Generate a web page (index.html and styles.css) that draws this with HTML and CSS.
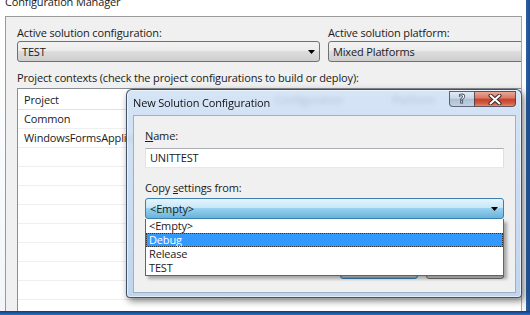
FILE: index.html
```html
<!DOCTYPE html>
<html>
<head>
<meta charset="utf-8">
<link rel="stylesheet" href="styles.css">
</head>
<body>
<div class="screen">
  <div class="upper">
    <div class="window">
      <div class="caption"><span>Configuration Manager</span></div>
      <div class="client">
        <div class="top-row">
          <div class="field f-left">
            <div class="label">Active solution configuration:</div>
            <div class="combo"><span>TEST</span><svg class="arrow" width="7" height="4" viewBox="0 0 7 4"><path d="M0 0H7L3.5 4Z" fill="#000"/></svg></div>
          </div>
          <div class="field f-right">
            <div class="label">Active solution platform:</div>
            <div class="combo"><span>Mixed Platforms</span></div>
          </div>
        </div>
        <div class="label contexts">Project contexts (check the project configurations to build or deploy):</div>
        <div class="grid">
          <div class="grow head"><div class="c c1">Project</div><div class="c c2">Configuration</div><div class="c c3">Platform</div><div class="c c4">Build</div></div>
          <div class="grow"><div class="c c1">Common</div><div class="c c2"></div><div class="c c3"></div><div class="c c4"></div></div>
          <div class="grow"><div class="c c1">WindowsFormsApplication1</div><div class="c c2"></div><div class="c c3"></div><div class="c c4"></div></div>
          <div class="grow"><div class="c c1"></div><div class="c c2"></div><div class="c c3"></div><div class="c c4"></div></div>
          <div class="grow"><div class="c c1"></div><div class="c c2"></div><div class="c c3"></div><div class="c c4"></div></div>
          <div class="grow"><div class="c c1"></div><div class="c c2"></div><div class="c c3"></div><div class="c c4"></div></div>
          <div class="grow"><div class="c c1"></div><div class="c c2"></div><div class="c c3"></div><div class="c c4"></div></div>
          <div class="grow"><div class="c c1"></div><div class="c c2"></div><div class="c c3"></div><div class="c c4"></div></div>
          <div class="grow"><div class="c c1"></div><div class="c c2"></div><div class="c c3"></div><div class="c c4"></div></div>
          <div class="grow"><div class="c c1"></div><div class="c c2"></div><div class="c c3"></div><div class="c c4"></div></div>
          <div class="grow"><div class="c c1"></div><div class="c c2"></div><div class="c c3"></div><div class="c c4"></div></div>
        </div>
      </div>
    </div>
    <div class="desk-right"></div>
  </div>
  <div class="taskbar"></div>

  <div class="dialog">
    <div class="dlg-title">
      <span class="dlg-caption">New Solution Configuration</span>
      <div class="cbtns">
        <div class="cbtn help"><span>?</span></div>
        <div class="cbtn close"><svg width="14" height="11" viewBox="0 0 14 11"><path d="M2.5 1.5L11.5 9.5M11.5 1.5L2.5 9.5" stroke="#3b2a2a" stroke-width="4" stroke-linecap="round"/><path d="M2.5 1.5L11.5 9.5M11.5 1.5L2.5 9.5" stroke="#fff" stroke-width="2" stroke-linecap="round"/></svg></div>
      </div>
    </div>
    <div class="dlg-body">
      <div class="dlabel"><span class="acc">N</span>ame:</div>
      <div class="textbox">UNITTEST</div>
      <div class="dlabel copy">Copy <span class="acc">s</span>ettings from:</div>
      <div class="dcombo-wrap">
        <div class="combo open"><span>&lt;Empty&gt;</span><svg class="arrow" width="7" height="4" viewBox="0 0 7 4"><path d="M0 0H7L3.5 4Z" fill="#000"/></svg></div>
        <div class="droplist">
          <div class="item">&lt;Empty&gt;</div>
          <div class="item sel">Debug</div>
          <div class="item">Release</div>
          <div class="item">TEST</div>
        </div>
      </div>
      <div class="buttons"><div class="btn default">OK</div><div class="btn">Cancel</div></div>
    </div>
  </div>
</div>
</body>
</html>
```

FILE: styles.css
```css
* { box-sizing: border-box; }
html, body { margin: 0; padding: 0; }
body {
  width: 530px; height: 315px; overflow: hidden;
  font-family: "Open Sans", "Noto Sans", sans-serif;
  font-size: 11px; letter-spacing: -0.15px; color: #1a1a1a;
}
.screen { position: relative; width: 530px; height: 315px; display: flex; flex-direction: column; overflow: hidden; }
.upper { height: 311px; display: flex; }
.window {
  width: 526px; height: 311px; display: flex; flex-direction: column;
  background: linear-gradient(180deg, #ffffff, #f3f5f8);
  padding: 0 4px 0 5px;
}
.desk-right { width: 4px; background: linear-gradient(90deg, #2f5f9c, #1c4f96); }
.taskbar { height: 4px; background: linear-gradient(180deg, #0f3c7c, #2f6fc0); }

.caption { height: 16px; display: flex; align-items: flex-end; padding-bottom: 8px; overflow: hidden; }
.caption span { line-height: 13px; font-size: 11px; color: #1a1a1a; }

.client {
  flex: 1; overflow: hidden;
  background: #f0f0f0;
  border-left: 1px solid #9a9a9a; border-top: 1px solid #9a9a9a; border-right: 1px solid #a8a8a8;
  padding: 8px 0 0 11px;
}
.label { line-height: 15px; white-space: nowrap; }
.top-row { display: flex; gap: 8px; }
.field { flex: none; }
.field.f-left { width: 303px; }
.field.f-right { width: 220px; }

.combo {
  margin-top: 1px; height: 21px; position: relative;
  border: 1px solid #707070; border-radius: 3px;
  background: linear-gradient(180deg, #f2f2f2 0%, #ebebeb 50%, #dddddd 50%, #cfcfcf 100%);
  display: flex; align-items: center; padding-left: 4px; padding-right: 4px;
  justify-content: space-between; white-space: nowrap;
}

.contexts { margin-top: 8px; }
.grid {
  margin-top: 3px; width: 510px; height: 240px;
  border: 1px solid #8a8f96; border-right: none; border-bottom: none;
  background: #fff;
}
.grow { display: flex; height: 19px; border-bottom: 1px solid #efefef; }
.grow.head { height: 21px; border-bottom: 1px solid #e2e2e2; }
.c { padding-left: 6px; line-height: 18px; white-space: nowrap; overflow: hidden; border-right: 1px solid #efefef; }
.head .c { line-height: 21px; }
.c1 { width: 211px; }
.c2 { width: 151px; padding-left: 46px; }
.c3 { width: 100px; padding-left: 12px; }
.c4 { flex: 1; border-right: none; }

/* dialog */
.dialog {
  position: absolute; left: 126px; top: 89px; width: 396px; height: 209px;
  border: 1px solid rgba(35, 45, 65, 0.8); border-radius: 6px 6px 4px 4px;
  background: linear-gradient(180deg, rgba(205, 224, 244, 0.84), rgba(185, 208, 236, 0.9));
  backdrop-filter: blur(2.5px);
  box-shadow: 2px 3px 7px rgba(0, 0, 0, 0.5), inset 0 0 0 1px rgba(255, 255, 255, 0.55);
  display: flex; flex-direction: column;
}
.dlg-title { height: 25px; display: flex; justify-content: space-between; align-items: flex-start; padding-left: 6px; padding-right: 5px; }
.dlg-caption { padding-top: 5px; line-height: 15px; color: #111; }
.cbtns { display: flex; margin-top: 1px; }
.cbtn { height: 16px; display: flex; align-items: center; justify-content: center; border: 1px solid rgba(50, 60, 80, 0.75); }
.cbtn.help {
  width: 25px; border-right: none; border-radius: 0 0 0 4px;
  background: linear-gradient(180deg, #e2eaf3 0%, #c9d6e5 45%, #aebfd3 50%, #c2d2e3 100%);
}
.cbtn.help span { font-family: "DejaVu Sans", sans-serif; font-weight: bold; font-size: 12px; color: #fff; -webkit-text-stroke: 0.8px #3d4a5c; line-height: 14px; }
.cbtn.close {
  width: 42px; border-radius: 0 0 4px 0;
  background: linear-gradient(180deg, #e8a899 0%, #d9745f 45%, #c4402a 50%, #d25a3f 80%, #e08a66 100%);
}

.dlg-body {
  flex: 1; margin: 0 5px 4px 6px;
  border: 1px solid #9db0c6; background: #f0f0f0;
  padding: 12px 11px 0 11px;
}
.dlabel { line-height: 15px; }
.acc { text-decoration: underline; text-decoration-thickness: 1px; text-underline-offset: 1px; }
.textbox {
  margin-top: 5px; height: 20px; padding-left: 4px; line-height: 18px;
  background: #fff; border: 1px solid; border-color: #abadb3 #dbdfe6 #e3e9ef #e2e3ea;
}
.dlabel.copy { margin-top: 12px; }
.dcombo-wrap { position: relative; margin-top: 3px; }
.combo.open {
  margin-top: 0; border-color: #3c7fb1;
  background: linear-gradient(180deg, #e5f4fc 0%, #c4e5f6 50%, #98d1ef 50%, #68b3db 100%);
  padding-right: 5px;
}
.droplist {
  position: absolute; left: 0; right: 0; top: 21px; z-index: 2;
  background: #fff; border: 1px solid #646464; border-top: none;
  box-shadow: 3px 3px 3px rgba(0, 0, 0, 0.3);
}
.item { height: 14px; line-height: 14px; padding-left: 3px; }
.item.sel { background: #3399ff; color: #fff; outline: 1px dotted #333; outline-offset: -1px; }

.buttons { display: flex; justify-content: flex-end; gap: 8px; margin-top: 37px; }
.btn {
  width: 78px; height: 23px; border: 1px solid #707070; border-radius: 3px;
  background: linear-gradient(180deg, #f2f2f2 0%, #ebebeb 50%, #dddddd 50%, #cfcfcf 100%);
  display: flex; align-items: center; justify-content: center;
}
.btn.default { border-color: #3c7fb1; box-shadow: inset 0 0 0 1px #48d0f7; }
```
